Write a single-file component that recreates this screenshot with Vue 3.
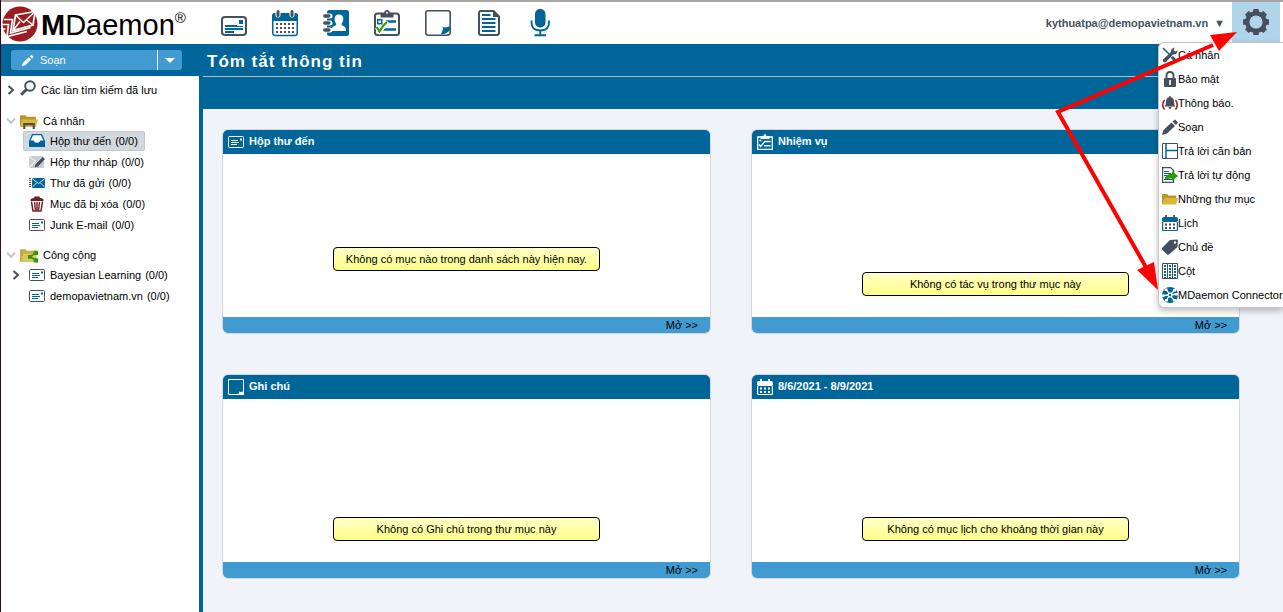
<script setup>
const tools = [
  { icon: 'mail', label: 'Thư' },
  { icon: 'calendar', label: 'Lịch' },
  { icon: 'contacts', label: 'Danh bạ' },
  { icon: 'tasks', label: 'Nhiệm vụ' },
  { icon: 'note', label: 'Ghi chú' },
  { icon: 'document', label: 'Tài liệu' },
  { icon: 'mic', label: 'Ghi âm' },
]

const groups = [
  {
    name: 'Cá nhân',
    icon: 's-folder-home',
    folders: [
      { name: 'Hộp thư đến', icon: 's-inbox', selected: true },
      { name: 'Hộp thư nháp', icon: 's-draft' },
      { name: 'Thư đã gửi', icon: 's-sent' },
      { name: 'Mục đã bị xóa', icon: 's-trash' },
      { name: 'Junk E-mail', icon: 's-mail' },
    ],
  },
  {
    name: 'Công cộng',
    icon: 's-folder-share',
    folders: [
      { name: 'Bayesian Learning', icon: 's-mail', closed: true },
      { name: 'demopavietnam.vn', icon: 's-mail' },
    ],
  },
]

const cards = [
  { title: 'Hộp thư đến', icon: 's-mail', message: 'Không có mục nào trong danh sách này hiện nay.', high: true },
  { title: 'Nhiệm vụ', icon: 's-tasks', message: 'Không có tác vụ trong thư mục này' },
  { title: 'Ghi chú', icon: 's-note', message: 'Không có Ghi chú trong thư mục này' },
  { title: '8/6/2021 - 8/9/2021', icon: 's-calendar', message: 'Không có mục lịch cho khoảng thời gian này' },
]

const options = [
  { name: 'Cá nhân', icon: 's-tools' },
  { name: 'Bảo mật', icon: 's-lock' },
  { name: 'Thông báo.', icon: 's-bell' },
  { name: 'Soạn', icon: 's-pencil' },
  { name: 'Trả lời căn bản', icon: 's-layout' },
  { name: 'Trả lời tự động', icon: 's-reply' },
  { name: 'Những thư mục', icon: 's-folder' },
  { name: 'Lịch', icon: 's-calendar' },
  { name: 'Chủ đề', icon: 's-tag' },
  { name: 'Cột', icon: 's-columns' },
  { name: 'MDaemon Connector', icon: 's-connector' },
]
</script>

<template>
  <div class="page">
    <svg class="defs" aria-hidden="true">
      <symbol id="mail" viewBox="0 0 28 28">
        <rect x="2" y="8" width="24" height="18" rx="3" fill="#fff" stroke="#464f5c" stroke-width="2" />
        <path d="M19 11h4v4h-4zM5 16h12v1h6v1H5zM5 19h18v2H5zM5 22h9v2H5z" fill="#069" />
      </symbol>
      <symbol id="calendar" viewBox="0 0 28 28">
        <rect x="1.75" y="5" width="24.5" height="21.5" rx="2.5" fill="#fff" stroke="#069" stroke-width="1.5" />
        <path d="M1 12V7q0-3 3-3h20q3 0 3 3v5z" fill="#069" />
        <path d="M7 3v3M21 3v3" stroke="#fff" stroke-width="5" stroke-linecap="round" />
        <path d="M7 2.500v4M21 2.500v4" stroke="#464f5c" stroke-width="3" stroke-linecap="round" />
        <path d="M5 15h18M5 19h18M5 23h18" stroke="#464f5c" stroke-width="2" stroke-dasharray="2 2" />
      </symbol>
      <symbol id="contacts" viewBox="0 0 28 28">
        <rect x="5" y="1" width="22" height="26" rx="2.500" fill="#069" />
        <path d="M3 7h5M3 14h5M3 21h5" stroke="#fff" stroke-width="5" stroke-linecap="round" />
        <path d="M2.800 7h4M2.800 14h4M2.800 21h4" stroke="#464f5c" stroke-width="3.400" stroke-linecap="round" />
        <path d="M17 5.500c3 0 4.500 2 4.300 4.700-.2 2.300-1 3.300-1.600 4.300v1.800c2.600 1 4.300 1.600 4.300 5.700H9.500c0-4 1.700-4.700 4.600-5.700v-1.800c-.8-1-1.400-2.300-1.500-4.300C12.500 7.500 14 5.500 17 5.500z" fill="#fff" />
      </symbol>
      <symbol id="tasks" viewBox="0 0 28 28">
        <rect x="2" y="4.500" width="24" height="21.500" rx="2.500" fill="#fff" stroke="#464f5c" stroke-width="2" />
        <path d="M7.500 8.500V5q0-1 1-1h2.500q.5-3 3-3t3 3H19.500q1 0 1 1v3.500z" fill="#464f5c" />
        <circle cx="14" cy="3.700" r="1" fill="#fff" />
        <rect x="4.750" y="10.750" width="4" height="4" fill="none" stroke="#069" stroke-width="1.500" />
        <path d="M13 12.500h10M10 20.500h13" stroke="#069" stroke-width="2.600" />
        <path d="M3.500 18.500l3 4.500L15 13" fill="none" stroke="#fff" stroke-width="3.500" />
        <path d="M3.500 18l3 4.500Q10 16 14 13" fill="none" stroke="#2c9a00" stroke-width="2" />
      </symbol>
      <symbol id="note" viewBox="0 0 28 28">
        <path d="M18 26.200H4Q1.800 26.200 1.800 24V4Q1.800 1.800 4 1.800h20Q26.200 1.800 26.200 4v14" fill="none" stroke="#464f5c" stroke-width="1.600" />
        <path d="M18 26.200h5q3.200 0 3.200-3.200v-5" fill="none" stroke="#464f5c" stroke-width="1.600" />
        <path d="M16.500 25.500q3-4 2.200-8 2.300 2 7.800-.5 0 8-10 8.500z" fill="#069" />
      </symbol>
      <symbol id="document" viewBox="0 0 28 28">
        <path d="M18.500 2H6Q4 2 4 4v20q0 2 2 2h16q2 0 2-2V7.500z" fill="#fff" stroke="#464f5c" stroke-width="2" />
        <path d="M18 1.500v6.500h6.500z" fill="#464f5c" />
        <path d="M7 6h8.500M7 10h13.500M7 14h13.500M7 18h13.500M7 22h13.500" stroke="#069" stroke-width="1.900" />
      </symbol>
      <symbol id="mic" viewBox="0 0 28 28">
        <rect x="9" y="0" width="10.500" height="18.500" rx="5" fill="#069" />
        <path d="M5.500 11.500v2q0 8 8.750 8t8.750-8v-2M14.250 21v5M8.500 26.200h11.500" fill="none" stroke="#069" stroke-width="1.900" />
      </symbol>
      <symbol id="gear" viewBox="0 0 28 28">
        <circle cx="14" cy="14" r="8.700" fill="none" stroke="#464f5c" stroke-width="4.200" />
        <path d="M10.500 5l1-4h5l1 4zM10.500 23l1 4h5l1-4zM5 10.500l-4 1v5l4 1zM23 10.500l4 1v5l-4 1zM5.200 10.100L3.100 6.600l3.500-3.500 3.500 2.100zM22.800 10.100l2.100-3.500-3.500-3.500-3.500 2.100zM5.200 17.900l-2.100 3.500 3.500 3.500 3.500-2.100zM22.800 17.900l2.100 3.500-3.500 3.500-3.500-2.100z" fill="#464f5c" />
      </symbol>

      <symbol id="s-mail" viewBox="0 0 16 16">
        <rect x=".5" y="2.500" width="15" height="11" rx="1" fill="none" stroke="currentColor" />
        <path d="M12 4.500h2v2h-2zM3 6h7v1H3zM3 8h8v1H3zM3 10h6v1H3z" fill="var(--accent)" />
      </symbol>
      <symbol id="s-tasks" viewBox="0 0 16 16">
        <path d="M.7 3h14.600v12.300H.7z" fill="none" stroke="currentColor" stroke-width="1.300" />
        <path d="M3.500 5V2h3Q7 0 8 0t1.500 2h3v3z" fill="currentColor" />
        <path d="M8 7.500h5.500M7 11.800h6.500" stroke="currentColor" stroke-width="1.500" />
        <path d="M2.500 6.500h2M2 10.500l1.700 2L8 7" fill="none" stroke="currentColor" stroke-width="1.300" />
      </symbol>
      <symbol id="s-note" viewBox="0 0 16 16">
        <path d="M.5.500h15v15H.5z" fill="none" stroke="currentColor" />
        <path d="M10 15.500q1.500-1.500 1-3 2 1 5-.5v3.500z" fill="currentColor" />
      </symbol>
      <symbol id="s-calendar" viewBox="0 0 16 16">
        <path d="M0 4q0-2 2-2h12q2 0 2 2v2H0z" fill="var(--accent)" />
        <rect x=".6" y="6.500" width="14.800" height="9" rx="1" fill="none" stroke="var(--accent)" stroke-width="1.200" />
        <path d="M4 0v4M12 0v4" stroke="currentColor" stroke-width="1.800" />
        <path d="M3 9.500h10M3 13h10" stroke="currentColor" stroke-width="2" stroke-dasharray="2 2" />
      </symbol>
      <symbol id="s-search" viewBox="0 0 16 16">
        <circle cx="10" cy="6" r="4.800" fill="none" stroke="#464f5c" stroke-width="2" />
        <path d="M6.500 9.500L1.200 14.800" stroke="#464f5c" stroke-width="3" />
      </symbol>
      <symbol id="s-folder" viewBox="0 0 16 16">
        <path d="M0 13V3h5l1.500 1.500H14V13z" fill="#b8962a" />
        <path d="M0 13.500L2.500 7H16l-2 6.500z" fill="#d9b936" />
      </symbol>
      <symbol id="s-folder-home" viewBox="0 0 17 16">
        <path d="M0 13V2h5l1.500 1.500H15V13z" fill="#b8962a" />
        <path d="M0 13l2-7h15l-2 7z" fill="#d9b936" />
        <path d="M4 15v-4.500h9V15" fill="none" stroke="#464f5c" stroke-width="2" />
      </symbol>
      <symbol id="s-folder-share" viewBox="0 0 17 16">
        <path d="M0 14V2h5l1.500 1.500H15V14z" fill="#c9ab45" />
        <path d="M1 14l2-8h13l-1 8z" fill="#dcc469" />
        <path d="M15 5.500L9.500 9l5.500 3.500" fill="none" stroke="#2c9a00" stroke-width="1.500" />
        <path d="M13 3.500h4v4h-4zM7.500 7.500h4v3.500h-4zM13 10.500h4v4h-4z" fill="#2c9a00" />
      </symbol>
      <symbol id="s-inbox" viewBox="0 0 16 16">
        <path d="M3 1h10l3 7v6H0V8z" fill="#069" />
        <path d="M4 2.300h8l2.300 5.200H11.300q-.5 2.200-3.300 2.200T4.700 7.500H1.700z" fill="#fff" />
      </symbol>
      <symbol id="s-draft" viewBox="0 0 16 16">
        <path d="M0 2h15v12H0z" fill="#c9ced3" />
        <path d="M0 2l7.500 6.500L15 2M0 14l5.500-6" fill="none" stroke="#fff" stroke-width=".9" />
        <path d="M5.500 13.500l1-3 7-7.500 2.500 2-7 7.500z" fill="#464f5c" />
      </symbol>
      <symbol id="s-sent" viewBox="0 0 16 16">
        <path d="M3 3h13v10H3z" fill="#069" />
        <path d="M3 3.500l6.500 5L16 3.500M3 12.500L7.500 8M16 12.500L11.500 8" fill="none" stroke="#fff" stroke-width=".8" />
        <path d="M0 3.500h2M0 5.500h2M0 7.500h2M0 9.500h2M0 11.500h2" stroke="#464f5c" />
      </symbol>
      <symbol id="s-trash" viewBox="0 0 16 16">
        <path d="M1.500 5V3.500Q2 2 5 2l.5-1.500h5L11 2q3 0 3.500 1.500V5z" fill="#6e1f26" />
        <path d="M2.500 5.500L4 15h8l1.500-9.500" fill="#fff" stroke="#6e1f26" stroke-width="1.500" />
        <path d="M5.500 6l1 8.500M8 6v8.500M10.500 6l-1 8.500" stroke="#6e1f26" stroke-width="1.400" />
      </symbol>
      <symbol id="s-tools" viewBox="0 0 16 16">
        <path d="M1 1l6 6M9 10l5.500 5" stroke="#069" stroke-width="1.500" />
        <path d="M10 10l5 5" stroke="#069" stroke-width="2.500" />
        <path d="M.5 13L9 5Q8.500 1.500 12.500.5L11.500 3l1.500 1.500L15.500 3.500Q15.500 7.500 11 7.500L3.500 15.500q-2 .5-3-2.500z" fill="#464f5c" />
      </symbol>
      <symbol id="s-lock" viewBox="0 0 16 16">
        <path d="M4.500 8V4.500Q4.500 1 8 1t3.500 3.500V8" fill="none" stroke="#464f5c" stroke-width="1.900" />
        <rect x="2" y="7" width="12" height="9" rx="1" fill="#464f5c" />
        <path d="M8 9v5" stroke="#fff" stroke-width="1.700" />
      </symbol>
      <symbol id="s-bell" viewBox="0 0 16 16">
        <path d="M8 1q1 0 1 1.200 3 .8 3 4.300 0 3.500 1.500 5h-11Q4 10 4 6.500q0-3.500 3-4.300Q7 1 8 1zM6.500 12h3q0 2-1.500 2t-1.500-2z" fill="#464f5c" />
        <path d="M2.500 5Q-1 10 2.500 14.500M13.500 5q3.500 5 0 9.500" fill="none" stroke="#a31d21" stroke-width="1.500" />
      </symbol>
      <symbol id="s-pencil" viewBox="0 0 16 16">
        <path d="M0 16l1.500-5 8-7.500L13 7l-8 7.500zM10.500 2.500L13 .5 16 3.500l-2 2.500z" fill="#464f5c" />
      </symbol>
      <symbol id="s-layout" viewBox="0 0 16 16">
        <path d="M.5.500h15v15H.5z" fill="#fff" stroke="#464f5c" />
        <path d="M4 0v16M4 7.500h12" stroke="#069" stroke-width="1.500" />
      </symbol>
      <symbol id="s-reply" viewBox="0 0 16 16">
        <path d="M.6.600h8l3 3v11.800h-11z" fill="#fff" stroke="#464f5c" stroke-width="1.200" />
        <path d="M2 4.500h5M2 6.500h7M2 8.500h4M2 12.500h8" stroke="#069" />
        <path d="M2.500 13Q3 7 10 6.500V4l6 5-6 5v-2.500Q6 11 2.500 13z" fill="#2c9a00" />
      </symbol>
      <symbol id="s-tag" viewBox="0 0 16 16">
        <path d="M0 9L8 1l7-.5q1 0 1 1L15.500 8 7 15.500q-1 .5-2 0L.5 11q-1-1-.5-2z" fill="#464f5c" />
        <circle cx="13" cy="3.500" r="1.200" fill="#fff" />
      </symbol>
      <symbol id="s-columns" viewBox="0 0 16 16">
        <path d="M.5.500h15v15H.5zM5.500 0v16M10.500 0v16" fill="#fff" stroke="#464f5c" />
        <path d="M3 2v13M8 2v13M13 2v13" stroke="#069" stroke-width="2" stroke-dasharray="2 1" />
      </symbol>
      <symbol id="s-connector" viewBox="0 0 16 16">
        <circle cx="8" cy="8" r="8" fill="#069" />
        <path d="M8 8L4 2M8 8l4.500-5M8 8l7-1M8 8l4 5.500M8 8l-3.500 5M8 8L1 8.500" stroke="#fff" stroke-width="1.300" />
        <circle cx="8" cy="8" r="2.500" fill="#fff" />
        <path d="M2.500 1.500h3v2.500h-3zM11 2h3v2.500h-3zM13 6h3v2.500h-3zM11 12h3v2.500h-3zM3 12h3v2.500H3zM0 7.500h2.500V10H0z" fill="#fff" />
        <circle cx="8" cy="8" r="1.200" fill="#069" />
      </symbol>
    </svg>

    <header class="top">
      <a class="logo" href="#">
        <svg class="logo-mark" viewBox="0 0 36 36" aria-hidden="true">
          <circle cx="18" cy="18" r="17.500" fill="#9a1d22" />
          <path d="M13.500 9L33 5.500 31 19 11 24.500z" fill="#9a1d22" stroke="#fff" stroke-width="1.700" />
          <path d="M13.500 9l8 7.500L33 5.500M11 24.500l7-9M31 19l-6.500-5" fill="none" stroke="#fff" stroke-width="1.500" />
          <path d="M2 13.500h8.500L8.500 27l20-5.500M0 18.500h6.500L5 30.500l20-5M0 23h3.500" fill="none" stroke="#fff" stroke-width="1.700" />
        </svg>
        <span class="logo-text"><b>M</b>Daemon</span><span class="reg">®</span>
      </a>
      <nav class="tools">
        <button v-for="t in tools" :key="t.icon" type="button" :aria-label="t.label">
          <svg aria-hidden="true"><use :href="'#' + t.icon" /></svg>
        </button>
      </nav>
      <div class="account">
        <button class="user" type="button">kythuatpa@demopavietnam.vn <span class="caret">▼</span></button>
        <button class="gear" type="button" aria-label="Tùy chọn">
          <svg aria-hidden="true"><use href="#gear" /></svg>
        </button>
        <ul class="menu">
          <li v-for="o in options" :key="o.name">
            <a href="#"><svg class="icon" aria-hidden="true"><use :href="'#' + o.icon" /></svg>{{ o.name }}</a>
          </li>
        </ul>
        <svg class="arrows" viewBox="0 0 233 300" aria-hidden="true">
          <path d="M163 45L8 112l89 157" fill="none" stroke="#f00" stroke-width="4" />
          <path d="M187 32l-27 3 9 16zM108 290l-21-20 17-8z" fill="#f00" />
        </svg>
      </div>
    </header>

    <div class="body">
      <aside class="side">
        <div class="compose">
          <button class="compose-main" type="button">
            <svg viewBox="0 0 14 14" aria-hidden="true"><path d="M1 13l1-3.500 6.500-6L11 6l-6.500 6zM9.500 2.500L11.500 1 13.500 3 12 5z" fill="#fff" /></svg>Soạn
          </button>
          <button class="compose-more" type="button" aria-label="Thêm"></button>
        </div>
        <a class="saved" href="#">
          <svg class="chev" viewBox="0 0 8 10" aria-hidden="true"><path d="M1.500 1L6 5 1.500 9" /></svg>
          <svg class="icon" aria-hidden="true"><use href="#s-search" /></svg>
          <span>Các lần tìm kiếm đã lưu</span>
        </a>
        <section v-for="g in groups" :key="g.name" class="group">
          <a class="group-head" href="#">
            <svg class="chev open" viewBox="0 0 10 8" aria-hidden="true"><path d="M1 1.500L5 6 9 1.500" /></svg>
            <svg class="folder" aria-hidden="true"><use :href="'#' + g.icon" /></svg>
            <span>{{ g.name }}</span>
          </a>
          <ul>
            <li v-for="f in g.folders" :key="f.name">
              <svg v-if="f.closed" class="chev sub" viewBox="0 0 8 10" aria-hidden="true"><path d="M1.500 1L6 5 1.500 9" /></svg>
              <a class="folder-row" :class="{ selected: f.selected }" href="#">
                <svg class="icon" aria-hidden="true"><use :href="'#' + f.icon" /></svg>
                <span>{{ f.name }}</span><span>(0/0)</span>
              </a>
            </li>
          </ul>
        </section>
      </aside>

      <main class="main">
        <h1>Tóm tắt thông tin</h1>
        <div class="strip"></div>
        <div class="cards">
          <section v-for="c in cards" :key="c.title" class="card">
            <h2><svg class="icon" aria-hidden="true"><use :href="'#' + c.icon" /></svg>{{ c.title }}</h2>
            <div class="card-body" :class="{ high: c.high }">
              <p>{{ c.message }}</p>
            </div>
            <footer><a href="#">Mở &gt;&gt;</a></footer>
          </section>
        </div>
      </main>
    </div>
  </div>
</template>

<style>
body {
  margin: 0;
}
</style>

<style scoped>
.page {
  --accent: #069;
  display: flex;
  flex-direction: column;
  min-height: 100vh;
  box-sizing: border-box;
  border-left: 1px solid #2c0f22;
  background: #fff;
  color: #000;
  font-family: "Liberation Sans", Arial, sans-serif;
  font-size: 11px;
  line-height: 16px;
}
.defs {
  position: absolute;
  width: 0;
  height: 0;
}
a {
  color: inherit;
  text-decoration: none;
}
button {
  margin: 0;
  padding: 0;
  border: 0;
  background: none;
  font: inherit;
  color: inherit;
}
ul {
  margin: 0;
  padding: 0;
  list-style: none;
}
svg {
  display: block;
  flex: none;
}
.icon {
  width: 16px;
  height: 16px;
  color: #464f5c;
}
.top {
  display: flex;
  height: 42px;
  border-top: 2px solid #a8a6a5;
  background: #fff;
}
.logo {
  display: flex;
  width: 219px;
  padding-left: 1px;
  padding-top: 4px;
  box-sizing: border-box;
}
.logo-mark {
  width: 36px;
  height: 36px;
}
.logo-text {
  margin-left: 3px;
  font-size: 29px;
  line-height: 38px;
}
.reg {
  font-size: 15px;
  line-height: 24px;
}
.tools {
  display: flex;
  gap: 23px;
  padding-top: 7px;
}
.tools svg,
.gear svg {
  width: 28px;
  height: 28px;
}
.tools button {
  height: 28px;
}
.account {
  position: relative;
  display: flex;
  margin-left: auto;
  padding-right: 3px;
}
.user {
  display: flex;
  gap: 6px;
  align-items: center;
  margin-right: 7px;
  color: #464f5c;
  font-weight: bold;
}
.gear {
  display: grid;
  place-items: center;
  width: 48px;
  height: 40px;
  background: #b0d4ea;
}
.menu {
  position: absolute;
  z-index: 2;
  top: 40px;
  right: 0;
  width: 124px;
  border: 1px solid #c4c6c9;
  border-right: 0;
  border-radius: 6px 0 0 6px;
  background: #fff;
  box-shadow: 0 3px 6px rgba(0, 0, 0, 0.25);
}
.menu a {
  display: flex;
  align-items: center;
  height: 24px;
  padding-left: 3px;
  white-space: nowrap;
}
.arrows {
  position: absolute;
  z-index: 3;
  top: -2px;
  right: 0;
  width: 233px;
  height: 300px;
  pointer-events: none;
}
.body {
  display: flex;
  flex: 1;
}
.side {
  width: 198px;
  flex: none;
  border-right: 4px solid #069;
}
.compose {
  display: flex;
  gap: 1px;
  height: 20px;
  padding: 6px 17px 6px 10px;
  background: #069;
}
.compose-main {
  display: flex;
  flex: 1;
  align-items: center;
  gap: 6px;
  padding-left: 10px;
  border-radius: 3px 0 0 3px;
  background: #429bd0;
  color: #fff;
}
.compose-main svg {
  width: 13px;
  height: 13px;
}
.compose-more {
  display: grid;
  place-items: center;
  width: 24px;
  border-radius: 0 3px 3px 0;
  background: #429bd0;
  box-shadow: -1px 0 0 #fff;
}
.compose-more::before {
  content: "";
  border: 5px solid transparent;
  border-top-color: #fff;
  border-bottom: 0;
}
.saved {
  display: flex;
  align-items: center;
  height: 28px;
  padding-left: 6px;
}
.saved .icon {
  margin: 0 5px 4px;
}
.chev {
  width: 8px;
  height: 10px;
  fill: none;
  stroke: #464f5c;
  stroke-width: 2;
}
.chev.open {
  width: 10px;
  height: 8px;
  stroke: #c3c8d0;
}
.chev.sub {
  margin-right: 3px;
}
.group {
  padding-top: 7px;
  margin-bottom: 3px;
}
.group-head {
  display: flex;
  align-items: center;
  height: 20px;
  padding-left: 5px;
}
.folder {
  width: 18px;
  height: 17px;
  margin: 0 5px 0 4px;
}
.group li {
  display: flex;
  align-items: center;
  justify-content: flex-start;
  height: 20px;
  margin-bottom: 1px;
  padding-left: 22px;
}
.group li:has(.sub) {
  padding-left: 11px;
}
.folder-row {
  display: flex;
  align-items: center;
  gap: 4px;
  height: 18px;
  padding: 0 6px 0 5px;
  border: 1px solid transparent;
  border-radius: 2px;
}
.folder-row .icon {
  margin-right: 1px;
}
.folder-row.selected {
  border-color: #bcc7cf;
  background: #d1d9df;
}
.main {
  flex: 1;
  min-width: 0;
  background: #f0f3f8;
}
h1 {
  margin: 0;
  height: 32px;
  padding-left: 4px;
  border-bottom: 1px solid #b9bdc1;
  background: #069;
  color: #fff;
  font-size: 17px;
  line-height: 35px;
  letter-spacing: 1px;
}
.strip {
  height: 32px;
  background: #069;
}
.cards {
  display: grid;
  grid-template-columns: 1fr 1fr;
  gap: 40px;
  padding: 20px 43px 32px 19px;
}
.card {
  border: 1px solid #d4d8dd;
  border-radius: 6px;
  background: #fff;
  overflow: hidden;
}
.card h2 {
  display: flex;
  align-items: flex-start;
  gap: 5px;
  height: 20px;
  margin: 0;
  padding: 4px 0 0 5px;
  background: #069;
  color: #fff;
  font-size: 11px;
  line-height: 14px;
}
.card h2 .icon {
  --accent: #fff;
  color: #fff;
}
.card-body {
  min-height: 163px;
  box-sizing: border-box;
  padding-top: 118px;
}
.card-body.high {
  padding-top: 93px;
}
.card p {
  width: 55%;
  box-sizing: border-box;
  margin: 0 auto;
  padding: 3px 8px;
  border: 1px solid #000;
  border-radius: 4px;
  background: linear-gradient(#ffffc8, #ffff88);
  text-align: center;
}
.card footer {
  height: 16px;
  padding-right: 12px;
  background: #429bd0;
  text-align: right;
}
</style>
